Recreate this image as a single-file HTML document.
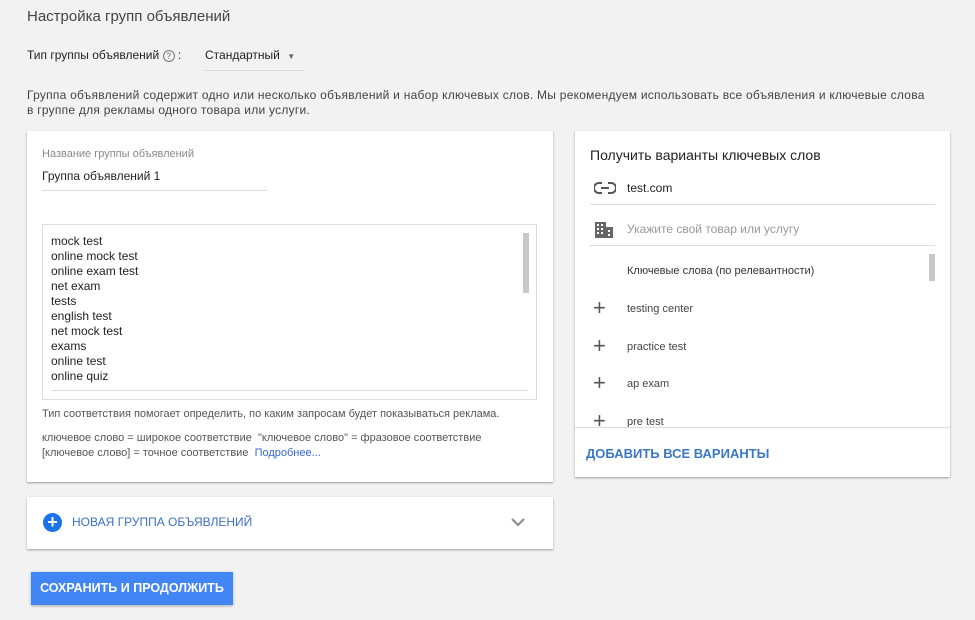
<!DOCTYPE html>
<html><head><meta charset="utf-8"><style>
*{margin:0;padding:0;box-sizing:border-box}
body{width:975px;height:620px;background:#f2f2f2;font-family:"Liberation Sans",sans-serif;color:#212121;position:relative;overflow:hidden}
.a{position:absolute;white-space:nowrap}
.card{position:absolute;background:#fff;box-shadow:0 1px 2px rgba(0,0,0,.35)}
.kw{position:absolute;left:0;font-size:12px;line-height:15px;color:#222}
</style></head><body>
<div class="a" style="left:27px;top:8px;font-size:15px;color:#444">Настройка групп объявлений</div>
<div class="a" style="left:27px;top:48px;font-size:12px;color:#222">Тип группы объявлений <span style="display:inline-block;width:12px;height:12px;border:1px solid #777;border-radius:50%;font-size:9px;text-align:center;line-height:10px;color:#777">?</span> :</div>
<div class="a" style="left:205px;top:48px;font-size:12px;color:#222">Стандартный <span style="font-size:8px;color:#666;margin-left:4px">▼</span></div>
<div class="a" style="left:203px;top:70px;width:101px;height:1px;background:#ddd"></div>
<div class="a" style="left:27px;top:88px;font-size:12px;letter-spacing:0.25px;line-height:15px;color:#444">Группа объявлений содержит одно или несколько объявлений и набор ключевых слов. Мы рекомендуем использовать все объявления и ключевые слова<br>в группе для рекламы одного товара или услуги.</div>

<div class="card" style="left:27px;top:131px;width:526px;height:351px">
 <div class="a" style="left:15px;top:17px;font-size:11px;color:#888">Название группы объявлений</div>
 <div class="a" style="left:15px;top:38px;font-size:12px;color:#222">Группа объявлений 1</div>
 <div class="a" style="left:15px;top:59px;width:225px;height:1px;background:#ddd"></div>
 <div class="a" style="left:15px;top:93px;width:495px;height:176px;border:1px solid #ddd">
  <div style="position:absolute;left:8px;top:9px">
   <div class="kw" style="top:0">mock test</div><div class="kw" style="top:15px">online mock test</div><div class="kw" style="top:30px">online exam test</div><div class="kw" style="top:45px">net exam</div><div class="kw" style="top:60px">tests</div><div class="kw" style="top:75px">english test</div><div class="kw" style="top:90px">net mock test</div><div class="kw" style="top:105px">exams</div><div class="kw" style="top:120px">online test</div><div class="kw" style="top:135px">online quiz</div>
  </div>
  <div class="a" style="left:480px;top:8px;width:6px;height:60px;background:#c8c8c8"></div>
  <div class="a" style="left:8px;top:165px;width:477px;height:1px;background:#ddd"></div>
 </div>
 <div class="a" style="left:15px;top:277px;font-size:11px;color:#555">Тип соответствия помогает определить, по каким запросам будет показываться реклама.</div>
 <div class="a" style="left:15px;top:300px;font-size:11px;line-height:15px;color:#555">ключевое слово = широкое соответствие &nbsp;"ключевое слово" = фразовое соответствие<br>[ключевое слово] = точное соответствие &nbsp;<span style="color:#3367d6">Подробнее...</span></div>
</div>

<div class="card" style="left:575px;top:131px;width:375px;height:346px">
 <div class="a" style="left:15px;top:16px;font-size:14px;color:#222">Получить варианты ключевых слов</div>
 <svg class="a" style="left:19px;top:50px" width="22" height="14" viewBox="0 0 22 14"><path d="M8 2H5a5 5 0 0 0 0 10h3M14 2h3a5 5 0 0 1 0 10h-3M7 7h8" fill="none" stroke="#555" stroke-width="2"/></svg>
 <div class="a" style="left:52px;top:50px;font-size:12px;color:#222">test.com</div>
 <div class="a" style="left:15px;top:73px;width:345px;height:1px;background:#ddd"></div>
 <svg class="a" style="left:19px;top:90px" width="20" height="18" viewBox="0 0 20 18"><rect x="1" y="1" width="11" height="16" fill="#666"/><rect x="12" y="6" width="7" height="11" fill="#666"/><g fill="#fff"><rect x="3" y="3" width="2" height="2"/><rect x="7" y="3" width="2" height="2"/><rect x="3" y="7" width="2" height="2"/><rect x="7" y="7" width="2" height="2"/><rect x="3" y="11" width="2" height="2"/><rect x="7" y="11" width="2" height="2"/><rect x="14" y="9" width="2" height="2"/><rect x="14" y="13" width="2" height="2"/></g></svg>
 <div class="a" style="left:52px;top:91px;font-size:12px;color:#999">Укажите свой товар или услугу</div>
 <div class="a" style="left:15px;top:114px;width:345px;height:1px;background:#ddd"></div>
 <div class="a" style="left:52px;top:134px;font-size:11px;color:#333">Ключевые слова (по релевантности)</div>
 <div class="a" style="left:354px;top:123px;width:6px;height:27px;background:#c8c8c8"></div>
 <div class="a" style="left:18px;top:166px;font-size:22px;font-weight:300;color:#555;line-height:22px">+</div><div class="a" style="left:52px;top:172px;font-size:11px;color:#444">testing center</div>
 <div class="a" style="left:18px;top:204px;font-size:22px;font-weight:300;color:#555;line-height:22px">+</div><div class="a" style="left:52px;top:210px;font-size:11px;color:#444">practice test</div>
 <div class="a" style="left:18px;top:241px;font-size:22px;font-weight:300;color:#555;line-height:22px">+</div><div class="a" style="left:52px;top:247px;font-size:11px;color:#444">ap exam</div>
 <div class="a" style="left:18px;top:279px;font-size:22px;font-weight:300;color:#555;line-height:22px;height:16px;overflow:hidden">+</div><div class="a" style="left:52px;top:285px;font-size:11px;color:#444;height:11px;overflow:hidden">pre test</div>
 <div class="a" style="left:0;top:296px;width:375px;height:1px;background:#ddd"></div>
 <div class="a" style="left:11px;top:315px;font-size:13px;font-weight:bold;color:#3b78c4">ДОБАВИТЬ ВСЕ ВАРИАНТЫ</div>
</div>

<div class="card" style="left:27px;top:497px;width:526px;height:52px">
 <div class="a" style="left:16px;top:16px;width:19px;height:19px;border-radius:50%;background:#1a73e8;color:#fff;font-size:18px;font-weight:bold;text-align:center;line-height:19px">+</div>
 <div class="a" style="left:45px;top:18px;font-size:12px;color:#3b6fc4">НОВАЯ ГРУППА ОБЪЯВЛЕНИЙ</div>
 <svg class="a" style="left:484px;top:21px" width="14" height="9" viewBox="0 0 14 9"><path d="M1 1l6 6 6-6" fill="none" stroke="#888" stroke-width="2"/></svg>
</div>

<div class="a" style="left:31px;top:572px;width:202px;height:33px;background:#4285f4;box-shadow:0 1px 3px rgba(0,0,0,.3);color:#fff;font-size:12.5px;font-weight:bold;text-align:center;line-height:33px">СОХРАНИТЬ И ПРОДОЛЖИТЬ</div>
</body></html>
